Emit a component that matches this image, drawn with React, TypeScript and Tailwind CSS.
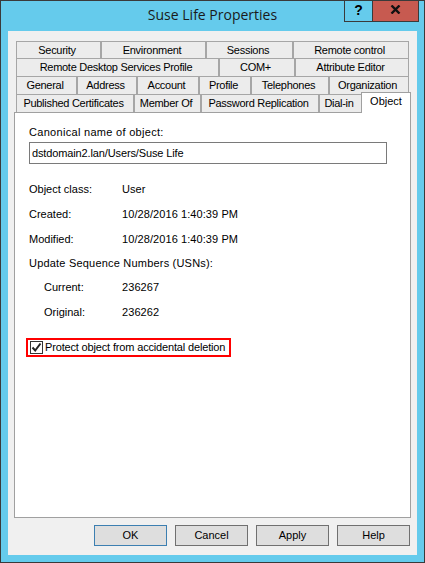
const rows = [
  [
    { label: 'Security', w: 'w-[84px]' },
    { label: 'Environment', w: 'w-[105px]' },
    { label: 'Sessions', w: 'w-[87px]' },
    { label: 'Remote control', w: 'w-[117px]' },
  ],
  [
    { label: 'Remote Desktop Services Profile', w: 'w-[202px]' },
    { label: 'COM+', w: 'w-[76px]' },
    { label: 'Attribute Editor', w: 'w-[115px]' },
  ],
  [
    { label: 'General', w: 'w-[60px]' },
    { label: 'Address', w: 'w-[60px]' },
    { label: 'Account', w: 'w-[62px]' },
    { label: 'Profile', w: 'w-[52px]' },
    { label: 'Telephones', w: 'w-[78px]' },
    { label: 'Organization', w: 'w-[81px]' },
  ],
]

const lastRow = [
  { label: 'Published Certificates', w: 'w-[117px]' },
  { label: 'Member Of', w: 'w-[67px]' },
  { label: 'Password Replication', w: 'w-[118px]' },
  { label: 'Dial-in', w: 'w-[43px]' },
]

function Tab({ label, w, h }: { label: string; w: string; h: string }) {
  return (
    <div
      className={`${w} ${h} pr-[3px] flex items-center justify-center whitespace-nowrap border-t border-l-2 first:border-l last:border-r border-[#a6a6a6] bg-[#ececec] tracking-[-0.28px]`}
    >
      {label}
    </div>
  )
}

function InfoRow({ label, value, indent }: { label: string; value: string; indent?: boolean }) {
  return (
    <div className={`flex h-[14px] items-center ${indent ? 'pl-[15px]' : ''}`}>
      <span className={indent ? 'w-[78px]' : 'w-[93px]'}>{label}</span>
      <span className="tracking-[0.08px]">{value}</span>
    </div>
  )
}

function DialogButton({ label, focused }: { label: string; focused?: boolean }) {
  return (
    <button
      className={`w-[73px] h-[21px] border bg-[#dedede] text-center ${focused ? 'border-[#3c7fb1]' : 'border-[#707070]'}`}
    >
      {label}
    </button>
  )
}

export default function App() {
  return (
    <div className="w-[425px] h-[563px] flex flex-col bg-[#65cbec] border border-[#3a3a3a] text-[11px] text-black font-['Liberation_Sans',sans-serif] overflow-hidden">
      {/* Title bar */}
      <div className="h-[30px] shrink-0 grid grid-cols-[1fr_auto_1fr]">
        <div />
        <div className="pt-[4px] text-[14px] leading-[20px] text-[#1a1a1a] font-['Open_Sans',sans-serif]">
          Suse Life Properties
        </div>
        <div className="flex justify-end pr-[5px]">
          <div className="w-[28px] h-[21px] flex items-center justify-center border-l border-b border-[#3a3a3a] font-bold text-[14px] leading-none pb-[3px]">
            ?
          </div>
          <div className="w-[47px] h-[21px] flex items-center justify-center bg-[#c75a50] border-l border-r border-b border-[#3a3a3a]">
            <svg width="11" height="9" viewBox="0 0 11 9" className="mb-[3px]">
              <path d="M1.5 0.5 L9.5 8.5 M9.5 0.5 L1.5 8.5" stroke="#111" strokeWidth="2.4" fill="none" />
            </svg>
          </div>
        </div>
      </div>

      {/* Client area */}
      <div className="mx-[7px] w-[409px] h-[524px] bg-[#f0f0f0] px-[6px] pt-[10px] flex flex-col">
        {/* Tabs */}
        <div className="pl-[2px]">
          {rows.map((row, i) => (
            <div key={i} className="flex">
              {row.map((t) => (
                <Tab key={t.label} label={t.label} w={t.w} h={i === 0 ? 'h-[17px]' : 'h-[18px]'} />
              ))}
            </div>
          ))}
        </div>
        <div className="flex h-[18px] pl-[2px] relative z-10">
          {lastRow.map((t) => (
            <Tab key={t.label} label={t.label} w={t.w} h="h-[18px]" />
          ))}
          <div className="w-[50px] h-[21px] -mt-[2px] border-t border-l border-r border-[#a0a0a0] pb-[4px] flex items-center justify-center bg-white">
            Object
          </div>
        </div>

        {/* Panel */}
        <div className="h-[406px] w-[397px] border border-[#a0a0a0] bg-white pl-[14px] pt-[12px] flex flex-col">
          <div className="h-[14px] flex items-center tracking-[0.3px]">Canonical name of object:</div>
          <div className="mt-[3px] w-[358px] h-[22px] border border-[#7a7a7a] px-[2px] flex items-center tracking-[-0.13px]">
            dstdomain2.lan/Users/Suse Life
          </div>
          <div className="mt-[18px] flex flex-col gap-[11px]">
            <InfoRow label="Object class:" value="User" />
            <InfoRow label="Created:" value="10/28/2016 1:40:39 PM" />
            <InfoRow label="Modified:" value="10/28/2016 1:40:39 PM" />
            <div className="h-[12px] flex items-center tracking-[0.2px]">Update Sequence Numbers (USNs):</div>
            <InfoRow indent label="Current:" value="236267" />
            <InfoRow indent label="Original:" value="236262" />
          </div>
          <div className="mt-[19px] -ml-[3px] w-[205px] h-[19px] border-2 border-[#ff0000] flex items-center pl-[2px] gap-[2px]">
            <div className="w-[13px] h-[13px] border border-[#333] flex items-center justify-center">
              <svg width="11" height="11" viewBox="0 0 11 11">
                <path d="M1.5 5.5 L4.2 8.5 L9.5 1.5" stroke="#222" strokeWidth="2" fill="none" />
              </svg>
            </div>
            <span className="whitespace-nowrap tracking-[-0.16px]">Protect object from accidental deletion</span>
          </div>
        </div>

        {/* Buttons */}
        <div className="mt-[7px] flex justify-end gap-[8px] pr-px">
          <DialogButton label="OK" focused />
          <DialogButton label="Cancel" />
          <DialogButton label="Apply" />
          <DialogButton label="Help" />
        </div>
      </div>
    </div>
  )
}
